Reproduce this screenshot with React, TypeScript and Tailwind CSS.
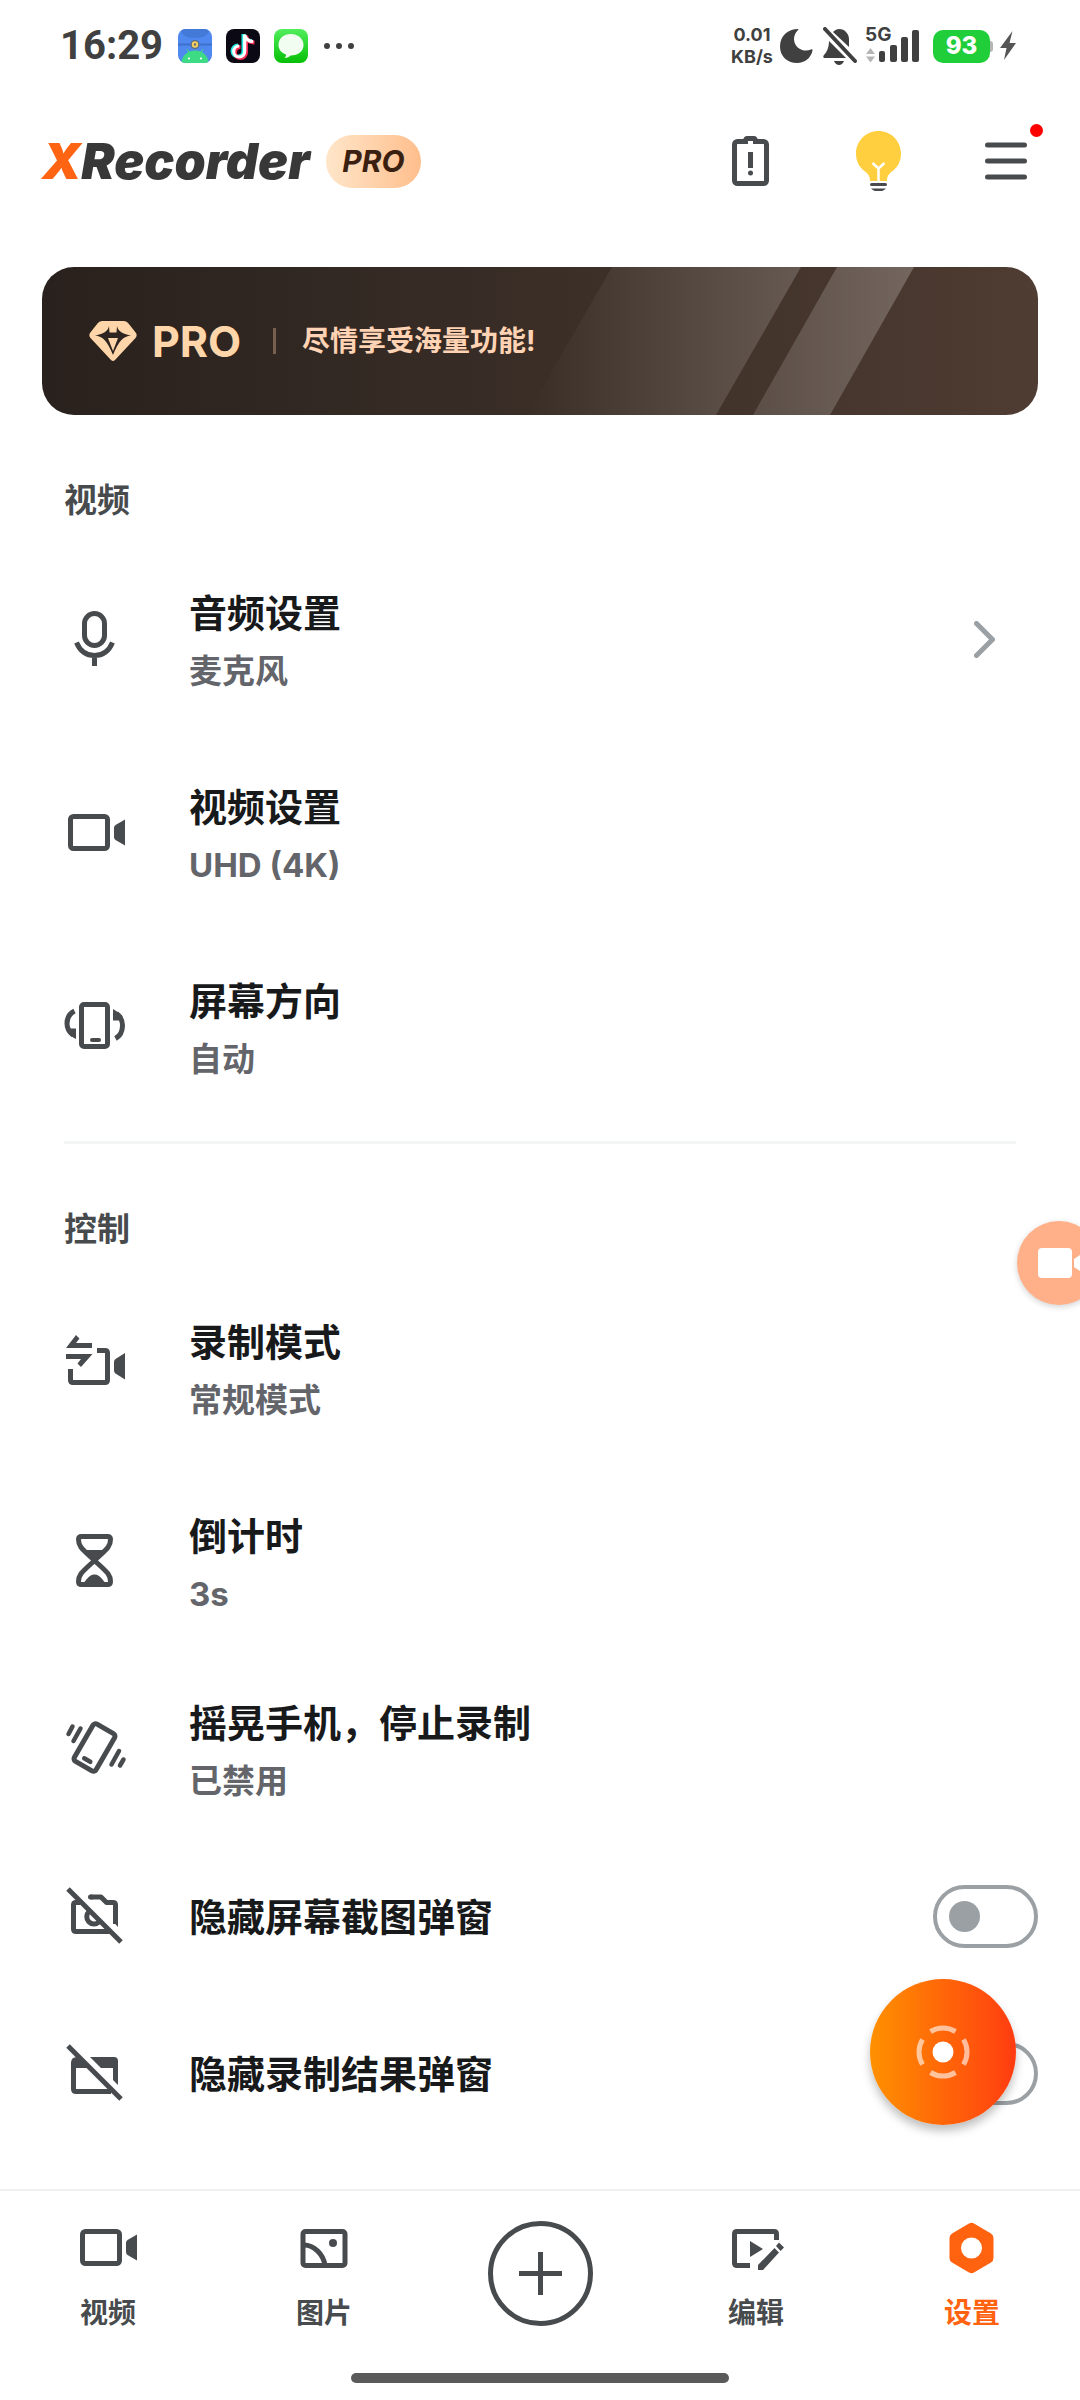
import { useState } from "react";
import type { ReactNode } from "react";

const IconBox = ({ children }: { children: ReactNode }) => (
  <svg
    viewBox="0 0 64 64"
    className="size-16 shrink-0 overflow-visible text-[#484b4d]"
    fill="none"
    stroke="currentColor"
    strokeWidth="5"
    aria-hidden="true"
  >
    {children}
  </svg>
);

const MicIcon = () => (
  <IconBox>
    <rect x="20.5" y="6.5" width="20" height="32" rx="10" />
    <path d="M12.5 35.5C16 44 22.5 48.5 30.5 48.5S45 44 48.5 35.5M30.5 48v11" />
  </IconBox>
);

const VideoIcon = () => (
  <IconBox>
    <rect x="6.5" y="15.5" width="37" height="32" rx="3" />
    <path d="M50 27q0-2 1.5-3L61 18.5v26L51.5 39q-1.5-1-1.5-3z" fill="currentColor" stroke="none" />
  </IconBox>
);

const OrientationIcon = () => (
  <IconBox>
    <rect x="17.5" y="9.5" width="26" height="42" rx="2.5" />
    <path d="M28 45h7" strokeWidth="4" strokeLinecap="round" />
    <path d="M10.5 16C5.5 18.5 3 23.5 3 28.5s2 8.5 6 11.5" />
    <path d="M4.5 33.5H12V44Q6 41 3 36z" fill="currentColor" stroke="none" />
    <path d="M51.5 43.5C56 41 58.5 36 58.5 30.5s-2-9-6-12" />
    <path d="M49 14v11.5h8.5L58.5 22Q55 17 49 14z" fill="currentColor" stroke="none" />
  </IconBox>
);

const ModeIcon = () => (
  <IconBox>
    <path
      d="M2 12 12-1l3.5 3.5L12 7h16v5zM2 18h26.5L17 31l-3.5-3.5L17 23H2z"
      fill="currentColor"
      stroke="none"
    />
    <path d="M33 14.5h8q2.5 0 2.5 2.5v27q0 2.5-2.5 2.5H9q-2.5 0-2.5-2.5V33" />
    <path d="M50 26q0-2 1.5-3L61 17v26.5l-9.5-6q-1.5-1-1.5-3z" fill="currentColor" stroke="none" />
  </IconBox>
);

const HourglassIcon = () => (
  <IconBox>
    <path d="M17.5 6.5h26q3 0 3 3c0 7-3 9-16 21c-13-12-16-14-16-21q0-3 3-3zM17.5 54.5h26q3 0 3-3c0-7-3-9-16-21c-13 12-16 14-16 21q0 3 3 3z" />
    <path d="M19 20h23L30.5 31zM18 54c4-2 6-9.5 12.5-9.5S39 52 43 54z" fill="currentColor" stroke="none" />
  </IconBox>
);

const ShakeIcon = () => (
  <IconBox>
    <g transform="rotate(30 30.5 30.5)">
      <rect x="18" y="9" width="25" height="43" rx="3" />
      <path d="M27 45h7" strokeWidth="4.5" strokeLinecap="round" />
    </g>
    <path
      d="M8.5 9.5 4.5 17M16.5 11.5 9.5 24M55 34l-7.5 13.5M59.5 42.5l-3.5 6"
      strokeWidth="4.5"
      strokeLinecap="round"
    />
  </IconBox>
);

const HideShotIcon = () => (
  <IconBox>
    <path d="M16 17.5h-4q-2.5 0-2.5 2.5v24q0 2.5 2.5 2.5h34" />
    <path d="M26.5 12H37l5.5 5.5H49q2.5 0 2.5 2.5v19" strokeLinejoin="round" />
    <path d="M26.5 12h1" strokeLinecap="round" />
    <path d="M49 36.5 54 42v-5z" fill="currentColor" stroke="none" />
    <path d="M25 26.5A7 7 0 0 0 35 37" />
    <path d="M4 4l53 53" />
  </IconBox>
);

const HideResultIcon = () => (
  <IconBox>
    <path d="M9.5 20v27q0 2.5 2.5 2.5h35" />
    <path
      d="M7 21q0-6 6-6l11 11H7zM26 15h24q4 0 4 4v24l-5-5V26H37z"
      fill="currentColor"
      stroke="none"
    />
    <path d="M4 4l53 53" />
  </IconBox>
);

type Row = {
  title: string;
  sub?: string;
  icon: ReactNode;
  height: string;
  chevron?: boolean;
};

const videoRows: Row[] = [
  { title: "音频设置", sub: "麦克风", icon: <MicIcon />, height: "h-[194px]", chevron: true },
  { title: "视频设置", sub: "UHD (4K)", icon: <VideoIcon />, height: "h-[194px]" },
  { title: "屏幕方向", sub: "自动", icon: <OrientationIcon />, height: "h-[194px]" },
];

const controlRows: Row[] = [
  { title: "录制模式", sub: "常规模式", icon: <ModeIcon />, height: "h-[194px]" },
  { title: "倒计时", sub: "3s", icon: <HourglassIcon />, height: "h-[194px]" },
  { title: "摇晃手机，停止录制", sub: "已禁用", icon: <ShakeIcon />, height: "h-[179px]" },
];

function SettingRow({ row }: { row: Row }) {
  return (
    <button type="button" className={`flex w-full items-center gap-[61px] px-16 text-left ${row.height}`}>
      {row.icon}
      <span className="flex flex-1 flex-col pt-1">
        <span className="text-[38px] leading-[60px] text-[#18191b]">{row.title}</span>
        {row.sub && <span className="text-[33px] leading-[56px] text-[#63656a]">{row.sub}</span>}
      </span>
      {row.chevron && (
        <span className="flex w-16 justify-center">
          <svg width="21" height="37" viewBox="0 0 21 37" fill="none" stroke="#9aa0a4" strokeWidth="5" strokeLinecap="round" strokeLinejoin="round" aria-hidden="true">
            <path d="M2.5 2.5l16 16-16 16" />
          </svg>
        </span>
      )}
    </button>
  );
}

function ToggleRow({ title, icon }: { title: string; icon: ReactNode }) {
  const [on, setOn] = useState(false);
  return (
    <label className="flex h-[157px] items-center gap-[61px] pr-[42px] pl-16">
      {icon}
      <span className="flex-1 text-[38px] leading-[60px] text-[#18191b]">{title}</span>
      <input
        type="checkbox"
        role="switch"
        checked={on}
        onChange={(e) => setOn(e.target.checked)}
        className="flex h-[63px] w-[105px] appearance-none items-center rounded-full border-4 border-[#9aa0a4] px-3 before:size-[31px] before:rounded-full before:bg-[#9aa0a4] checked:justify-end checked:border-[#ff6310] checked:before:bg-[#ff6310]"
      />
    </label>
  );
}

function StatusBar() {
  return (
    <div className="flex h-[92px] items-center justify-between pr-[63px] pl-[60px] text-[#404040]">
      <div className="flex items-center">
        <span className="w-[118px] font-[Roboto,sans-serif] text-[40px] leading-none font-bold">16:29</span>
        <div className="flex items-center gap-[14px]">
          <svg width="34" height="34" viewBox="0 0 34 34" aria-hidden="true">
            <clipPath id="drawer"><rect width="34" height="34" rx="8" /></clipPath>
            <g clipPath="url(#drawer)">
              <path d="M0 0h34v34H0z" fill="#4f88ee" />
              <path d="M3 0h28c0 6-5 9-14 9S3 6 3 0z" fill="#437ad8" />
              <path d="M0 15.5h34" stroke="#3f70cb" strokeWidth="2" />
              <circle cx="17" cy="15.5" r="4.5" fill="#5c6c80" />
              <circle cx="17" cy="15.5" r="2.2" fill="none" stroke="#f5d060" strokeWidth="2" />
              <path d="M4 34c0-7 5.5-12 13-12s13 5 13 12zM9 20l3 5M25 20l-3 5" fill="#3ddc84" stroke="#3ddc84" />
              <circle cx="11" cy="29.5" r="1.1" fill="#fff" />
              <circle cx="23" cy="29.5" r="1.1" fill="#fff" />
            </g>
          </svg>
          <svg width="34" height="34" viewBox="0 0 34 34" fill="none" strokeWidth="4" aria-hidden="true">
            <rect width="34" height="34" rx="8" fill="#0b0a14" />
            <path d="M17.5 5v17a5.5 5.5 0 1 1-5.5-5.5M17.5 5.5c1 4 4 6.5 8.5 6.5" stroke="#25e8e4" />
            <path d="M20 6.5v17a5.5 5.5 0 1 1-5.5-5.5M20 7c1 4 4 6.5 8.5 6.5" stroke="#fb2b54" />
            <path d="M18.7 5.5v17a5.5 5.5 0 1 1-5.5-5.5M18.7 6c1 4 4 6.5 8.5 6.5" stroke="#fff" strokeWidth="3.2" />
          </svg>
          <svg width="34" height="34" viewBox="0 0 34 34" aria-hidden="true">
            <defs>
              <linearGradient id="msg" x1="0" y1="0" x2="0" y2="1">
                <stop stopColor="#51ee5c" />
                <stop offset="1" stopColor="#06bf06" />
              </linearGradient>
            </defs>
            <rect width="34" height="34" rx="8" fill="url(#msg)" />
            <path d="M17 5C9.5 5 4.5 9.5 4.5 16c0 4.5 3 8 7.5 9.5 0 1.5-.5 2.5-1.5 3.5 3 0 4.5-1 6-2.5 8 0 13-4.5 13-10.5S24.5 5 17 5z" fill="#f2fdf2" />
          </svg>
          <svg width="36" height="34" viewBox="0 0 36 34" fill="currentColor" aria-hidden="true">
            <circle cx="5" cy="17" r="3" />
            <circle cx="17" cy="17" r="3" />
            <circle cx="29" cy="17" r="3" />
          </svg>
        </div>
      </div>

      <div className="flex items-center">
        <div className="flex w-12 flex-col items-center text-[18px] leading-[22px] font-bold">
          <span>0.01</span>
          <span>KB/s</span>
        </div>
        <svg width="33" height="36" viewBox="0 0 33 36" fill="currentColor" className="ml-1" aria-hidden="true">
          <path d="M18 1C8 1 0 8 0 18.5S8 35 17 35c8 0 14-5 15.5-12.5.2-1-.5-1.5-1.5-1C24 25 14 20 14 11c0-4 2-7 4-9 .5-.5.5-1 0-1z" />
        </svg>
        <svg width="34" height="38" viewBox="0 0 34 38" fill="currentColor" className="ml-[10px]" aria-hidden="true">
          <path d="M2 2l30 32" stroke="currentColor" strokeWidth="4" strokeLinecap="round" />
          <path d="M10 5c2-2 4-3 6-3 6 0 10 5 10 10v8zM6 14l17 17H1c-1-1-1-2 0-3 3-3 5-8 5-14zM11 34h10c-1 2.5-3 4-5 4s-4-1.5-5-4z" />
        </svg>
        <div className="relative ml-2 h-9 w-14">
          <span className="absolute -top-1 left-0 text-[19px] leading-[22px] font-bold">5G</span>
          <svg width="56" height="36" viewBox="0 0 56 36" aria-hidden="true">
            <path d="M1 26l4.5-6 4.5 6zM1 28.5l4.5 6 4.5-6z" fill="#b5b5b5" />
            <g fill="currentColor">
              <rect x="14" y="23" width="6" height="11" rx="2" />
              <rect x="25" y="17" width="7" height="17" rx="2" />
              <rect x="36" y="9" width="7" height="25" rx="2" />
              <rect x="47" y="2" width="7" height="32" rx="2" />
            </g>
          </svg>
        </div>
        <span className="ml-3 flex h-[33px] w-[57px] items-center justify-center rounded-[10px] bg-[#20ce3a] text-[24px] leading-none font-extrabold text-white">
          93
        </span>
        <span className="h-[11px] w-[3px] rounded-r bg-[#b5b5b5]" />
        <svg width="17" height="30" viewBox="0 0 17 30" fill="#555" className="ml-[7px]" aria-hidden="true">
          <path d="M12.5 0 0 17h6.5L4 29 16 12H9.5z" />
        </svg>
      </div>
    </div>
  );
}

function Header() {
  return (
    <header className="flex h-[138px] items-center justify-between pr-6 pl-[42px]">
      <div className="flex items-center gap-3">
        <h1 className="w-[272px] text-[50px] leading-none font-black whitespace-nowrap text-[#383838] italic">
          <span className="text-[#ff6412]">X</span>Recorder
        </h1>
        <span className="flex h-[53px] w-[95px] items-center justify-center rounded-full bg-linear-to-r from-[#ffe6c9] to-[#ffbe8c] text-[30px] font-bold text-[#3a2010] italic">
          PRO
        </span>
      </div>
      <div className="flex items-center">
        <button type="button" aria-label="电池" className="flex size-[100px] items-center justify-center">
          <svg width="37" height="50" viewBox="0 0 37 50" fill="none" stroke="#484b4d" strokeWidth="5" aria-hidden="true">
            <rect x="2.5" y="5.5" width="32" height="42" rx="3" />
            <path d="M11 4Q12 0 15 0h7q3 0 4 4z" fill="#484b4d" stroke="none" />
            <path d="M18.5 16v16" />
            <path d="M16 5h5v3h-5z" fill="#fff" stroke="none" />
            <circle cx="18.5" cy="37" r="2.5" fill="#484b4d" stroke="none" />
          </svg>
        </button>
        <button type="button" aria-label="提示" className="ml-7 flex size-[100px] items-center justify-center">
          <svg width="45" height="60" viewBox="0 0 45 60" fill="none" aria-hidden="true">
            <path d="M22.5 0C10 0 0 10 0 22.5c0 9 4 14 9 18 4 3 5 5.5 5 9.5h17c0-4 1-6.5 5-9.5 5-4 9-9 9-18C45 10 35 0 22.5 0z" fill="#ffcf3f" />
            <path d="M16.5 32l6 5.5 6-5.5M22.5 37v13" stroke="#fff" strokeWidth="2.5" />
            <path d="M15.5 53.5h14" stroke="#484b4d" strokeWidth="3" strokeLinecap="round" />
            <path d="M15 57.5h15c-2 2-4 3-7.5 3s-5.500-1-7.5-3z" fill="#484b4d" />
          </svg>
        </button>
        <button type="button" aria-label="菜单" className="relative ml-7 flex size-[100px] items-center justify-center">
          <svg width="42" height="38" viewBox="0 0 42 38" stroke="#484b4d" strokeWidth="5" strokeLinecap="round" aria-hidden="true">
            <path d="M2.5 3h37M2.5 19h37M2.5 35h37" />
          </svg>
          <span className="absolute top-[13px] right-[13px] size-[13px] rounded-full bg-[#ff0000]" />
        </button>
      </div>
    </header>
  );
}

function ProBanner() {
  return (
    <button
      type="button"
      className="relative mx-[42px] mt-[37px] flex h-[148px] items-center overflow-hidden rounded-[32px] bg-linear-to-r from-[#29211d] via-[#3a2e27] to-[#4f3c32] pl-[47px] text-left"
    >
      <svg viewBox="0 0 996 148" preserveAspectRatio="xMaxYMid slice" className="absolute inset-0 size-full" aria-hidden="true">
        <defs>
          <linearGradient id="beamA">
            <stop stopColor="#fff" stopOpacity="0" />
            <stop offset="1" stopColor="#fff" stopOpacity="0.18" />
          </linearGradient>
          <linearGradient id="beamB">
            <stop stopColor="#fff" stopOpacity="0.13" />
            <stop offset="1" stopColor="#fff" stopOpacity="0.23" />
          </linearGradient>
        </defs>
        <path d="M570 0h189l-85 148H485z" fill="url(#beamA)" />
        <path d="M795 0h77l-84 148h-77z" fill="url(#beamB)" />
      </svg>
      <svg width="48" height="40" viewBox="0 0 48 40" aria-hidden="true">
        <path d="M13 0h22q3 0 4.5 2.5L47 12q1.5 2.5-.5 5L26 39q-2 2-4 0L1.5 17Q-.5 14.5 1 12l7.5-9.5Q10 0 13 0z" fill="#ffd6a9" />
        <path d="M6 14.5C13 13 19 11 20 5l.5 6.5h7L28 5c1 6 7 8 14 9.5-8 1-12 5-18 19.5C18 19.5 14 15.5 6 14.5z" fill="#2e2520" />
        <path d="M19 17h10l-5 13z" fill="#ffd6a9" />
      </svg>
      <span className="ml-[15px] w-[89px] text-[43px] leading-none font-bold text-[#ffd6a9]">PRO</span>
      <span className="ml-8 h-[26px] w-[3px] bg-[#78604f]" />
      <span className="ml-[26px] text-[28px] leading-none text-[#ffd3b3]">尽情享受海量功能!</span>
    </button>
  );
}

const navItem = "flex flex-col items-center gap-[13px] pt-[25px]";

function BottomNav() {
  return (
    <footer className="border-t-2 border-[#f0f0f0] bg-white">
      <nav className="grid h-[182px] grid-cols-5 text-[28px] leading-[40px] text-[#484b4d]">
        <a href="#video" className={navItem}>
          <VideoIcon />
          <span>视频</span>
        </a>
        <a href="#photo" className={navItem}>
          <IconBox>
            <rect x="11" y="15.5" width="42" height="34" rx="2.5" />
            <path d="M12 29c10 0 19 9 21 20" />
            <circle cx="41" cy="27" r="4" fill="currentColor" stroke="none" />
          </IconBox>
          <span>图片</span>
        </a>
        <div className="flex justify-center pt-[30px]">
          <button type="button" aria-label="新建" className="flex size-[105px] items-center justify-center rounded-full border-[5px] border-[#484b4d]">
            <svg width="43" height="43" viewBox="0 0 43 43" stroke="#484b4d" strokeWidth="5" aria-hidden="true">
              <path d="M21.5 0v43M0 21.5h43" />
            </svg>
          </button>
        </div>
        <a href="#edit" className={navItem}>
          <IconBox>
            <path d="M26 49.5H13q-2.5 0-2.5-2.5V18q0-2.5 2.5-2.5h37q2.5 0 2.5 2.5v6" />
            <path d="M26 25l13 8-13 8zM34 49v5h5l16-17.5-4.5-4.5zM52 30l3-3.5 5 5-3.5 3.5z" fill="currentColor" stroke="none" />
          </IconBox>
          <span>编辑</span>
        </a>
        <a href="#settings" aria-current="page" className={`${navItem} text-[#ff6310]`}>
          <svg width="64" height="64" viewBox="0 0 64 64" aria-hidden="true">
            <path
              d="M29 7.5q2.5-1.5 5 0L51 17.5q2.5 1.5 2.5 4.5v20q0 3-2.5 4.5L34 56.5q-2.5 1.5-5 0L12 46.5Q9.5 45 9.5 42V22q0-3 2.5-4.5zM31.5 21.5a10.5 10.5 0 1 0 0 21 10.5 10.5 0 0 0 0-21z"
              fill="currentColor"
            />
          </svg>
          <span>设置</span>
        </a>
      </nav>
      <div className="flex h-[27px] justify-center">
        <span className="h-[10px] w-[35%] rounded-full bg-[#5a5a5a]" />
      </div>
    </footer>
  );
}

export default function App() {
  return (
    <div className="flex min-h-screen flex-col overflow-x-hidden bg-white font-[Inter,'Noto_Sans_CJK_SC',sans-serif] font-bold">
      <StatusBar />
      <Header />
      <ProBanner />

      <main className="flex-1">
        <section>
          <h2 className="mt-[60px] px-16 text-[33px] leading-[50px] text-[#484b4d]">视频</h2>
          <div className="mt-[17px]">
            {videoRows.map((row) => (
              <SettingRow key={row.title} row={row} />
            ))}
          </div>
        </section>
        <hr className="mx-16 mt-[17px] border-t-[3px] border-[#f3f4f4]" />
        <section>
          <h2 className="mt-[60px] px-16 text-[33px] leading-[50px] text-[#484b4d]">控制</h2>
          <div className="mt-[17px]">
            {controlRows.map((row) => (
              <SettingRow key={row.title} row={row} />
            ))}
            <ToggleRow title="隐藏屏幕截图弹窗" icon={<HideShotIcon />} />
            <ToggleRow title="隐藏录制结果弹窗" icon={<HideResultIcon />} />
          </div>
        </section>
      </main>

      <BottomNav />

      {/* floating capture bubble, docked to the right edge */}
      <button
        type="button"
        aria-label="悬浮窗"
        className="fixed top-[1221px] -right-[21px] size-[84px] rounded-full bg-[#ffb088] shadow-[0_2px_6px_rgba(0,0,0,0.18)]"
      >
        <svg width="84" height="84" viewBox="0 0 84 84" fill="#fff" aria-hidden="true">
          <rect x="21" y="27" width="34" height="30" rx="4" />
          <path d="M57 38l12-8v24l-12-8z" />
        </svg>
      </button>

      {/* record */}
      <button
        type="button"
        aria-label="开始录制"
        className="fixed right-16 bottom-[275px] flex size-[146px] items-center justify-center rounded-full bg-linear-to-r from-[#ff9000] via-[#ff6608] to-[#ff3a10] shadow-[0_6px_10px_rgba(0,0,0,0.25)]"
      >
        <svg width="54" height="54" viewBox="0 0 54 54" fill="none" aria-hidden="true">
          <circle cx="27" cy="27" r="10.5" fill="#fff" />
          <path
            d="M14.5 6.5a24 24 0 0 1 25 0M47.5 14.5a24 24 0 0 1 0 25M39.5 47.5a24 24 0 0 1-25 0M6.5 39.5a24 24 0 0 1 0-25"
            stroke="#fff"
            strokeOpacity="0.6"
            strokeWidth="5"
          />
        </svg>
      </button>
    </div>
  );
}
